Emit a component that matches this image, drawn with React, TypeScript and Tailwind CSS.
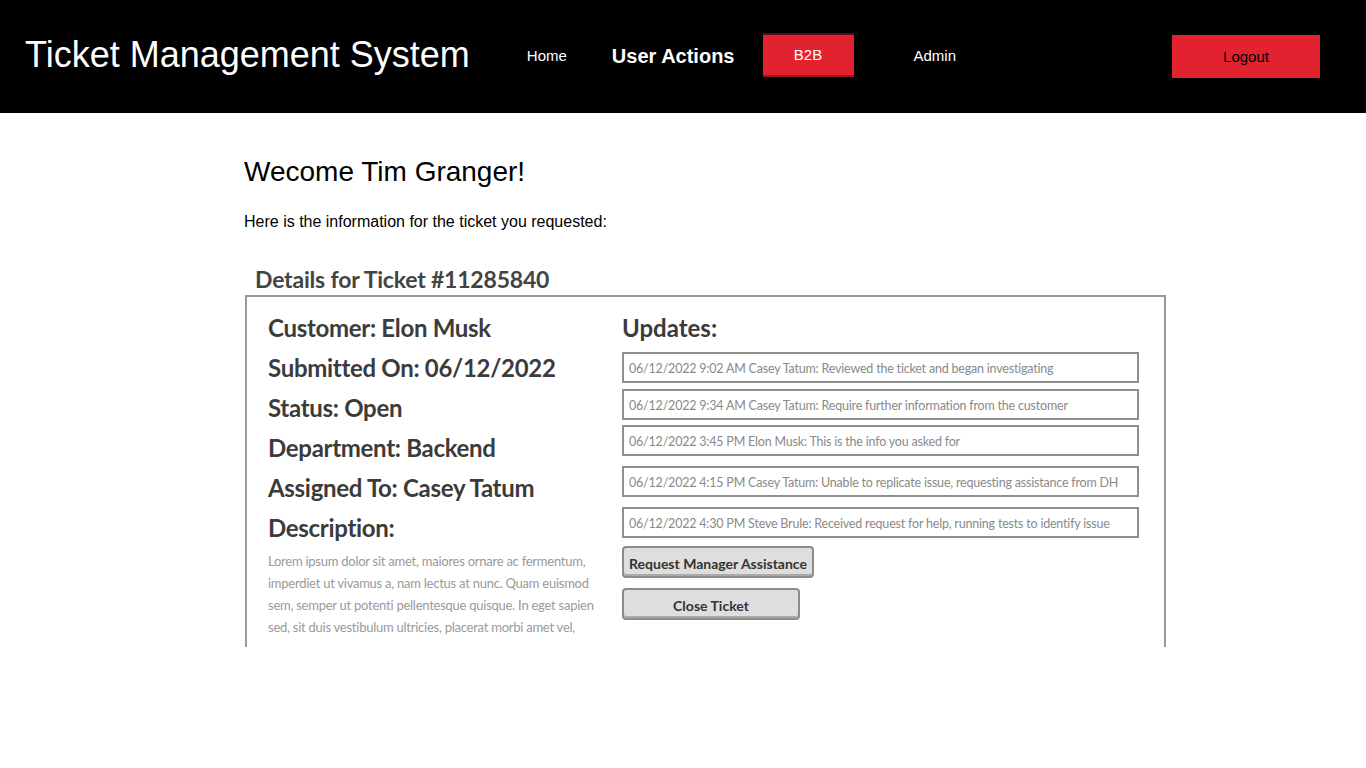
const updates = [
  { text: '06/12/2022 9:02 AM Casey Tatum: Reviewed the ticket and began investigating', gap: 'mt-0' },
  { text: '06/12/2022 9:34 AM Casey Tatum: Require further information from the customer', gap: 'mt-[6px]' },
  { text: '06/12/2022 3:45 PM Elon Musk: This is the info you asked for', gap: 'mt-[5px]' },
  { text: '06/12/2022 4:15 PM Casey Tatum: Unable to replicate issue, requesting assistance from DH', gap: 'mt-[10px]' },
  { text: '06/12/2022 4:30 PM Steve Brule: Received request for help, running tests to identify issue', gap: 'mt-[10px]' },
];

const fields = [
  'Customer: Elon Musk',
  'Submitted On: 06/12/2022',
  'Status: Open',
  'Department: Backend',
  'Assigned To: Casey Tatum',
  'Description:',
];

const description = [
  'Lorem ipsum dolor sit amet, maiores ornare ac fermentum,',
  'imperdiet ut vivamus a, nam lectus at nunc. Quam euismod',
  'sem, semper ut potenti pellentesque quisque. In eget sapien',
  'sed, sit duis vestibulum ultricies, placerat morbi amet vel,',
];

function Header() {
  return (
    <header className="bg-black h-[113px] flex items-center text-white font-['Liberation_Sans',Arial,sans-serif]">
      <h1 className="ml-[25px] text-[36px] leading-none -mt-[3px]">Ticket Management System</h1>
      <nav className="flex items-center ml-[57px]">
        <a className="text-[15px] -mt-[1px]">Home</a>
        <a className="ml-[45px] text-[20px] font-bold -mt-[1px]">User Actions</a>
        <button className="ml-[28px] w-[91px] h-[44px] -mt-[3px] bg-[#e3222f] border-y-2 border-t-[#5a0d12] border-b-[#9b1820] text-[15px] text-white">
          B2B
        </button>
        <a className="ml-[60px] text-[15px] -mt-[1px]">Admin</a>
      </nav>
      <button className="ml-auto mr-[46px] w-[148px] h-[43px] bg-[#e3222f] text-black text-[15px] pt-[1px]">
        Logout
      </button>
    </header>
  );
}

function TicketMockup() {
  return (
    <div className="mt-[27px] w-[922px] h-[386px] overflow-hidden font-['Lato',sans-serif]">
      <h3 className="ml-[11px] text-[23px] font-bold text-[#444] leading-[34px] tracking-[-0.2px] pt-[1px] -mb-[1px]">Details for Ticket #11285840</h3>
      <div className="ml-[1px] border-2 border-[#999] h-[400px] flex pt-[11px]">
        <div className="w-[375px] pl-[21px]">
          {fields.map((f) => (
            <div key={f} className="text-[24px] font-bold text-[#3b3b3b] leading-[40px] tracking-[-0.3px]">{f}</div>
          ))}
          <div className="text-[13px] text-[#9a9a9a] leading-[22px] mt-[2px] tracking-[-0.25px]">
            {description.map((l) => (
              <div key={l} className="whitespace-nowrap">{l}</div>
            ))}
          </div>
        </div>
        <div className="w-[517px]">
          <div className="text-[24px] font-bold text-[#3b3b3b] leading-[40px]">Updates:</div>
          <div className="flex flex-col mt-[4px]">
            {updates.map((u) => (
              <div key={u.text} className={`${u.gap} h-[31px] border-2 border-[#8f8f8f] flex items-center pl-[5px] pt-[3px] text-[12.5px] text-[#8a8a8a] whitespace-nowrap tracking-[-0.2px]`}>
                {u.text}
              </div>
            ))}
          </div>
          <div className="flex flex-col items-start mt-[8px] gap-[10px]">
            <button className="w-[192px] h-[32px] bg-[#dedede] border-2 border-[#8c8c8c] rounded-[4px] shadow-[inset_0_-2px_0_#aaa] text-[14px] font-bold text-[#333] pt-[3px]">
              Request Manager Assistance
            </button>
            <button className="w-[178px] h-[32px] bg-[#dedede] border-2 border-[#8c8c8c] rounded-[4px] shadow-[inset_0_-2px_0_#aaa] text-[14px] font-bold text-[#333] pt-[3px]">
              Close Ticket
            </button>
          </div>
        </div>
      </div>
    </div>
  );
}

export default function App() {
  return (
    <div className="min-h-[768px] bg-white">
      <Header />
      <main className="pl-[244px] pt-[43px]">
        <h2 className="text-[28px] leading-[32px] text-black font-['Liberation_Sans',Arial,sans-serif]">Wecome Tim Granger!</h2>
        <p className="mt-[22px] text-[16px] text-black font-['Liberation_Sans',Arial,sans-serif]">Here is the information for the ticket you requested:</p>
        <TicketMockup />
      </main>
    </div>
  );
}
